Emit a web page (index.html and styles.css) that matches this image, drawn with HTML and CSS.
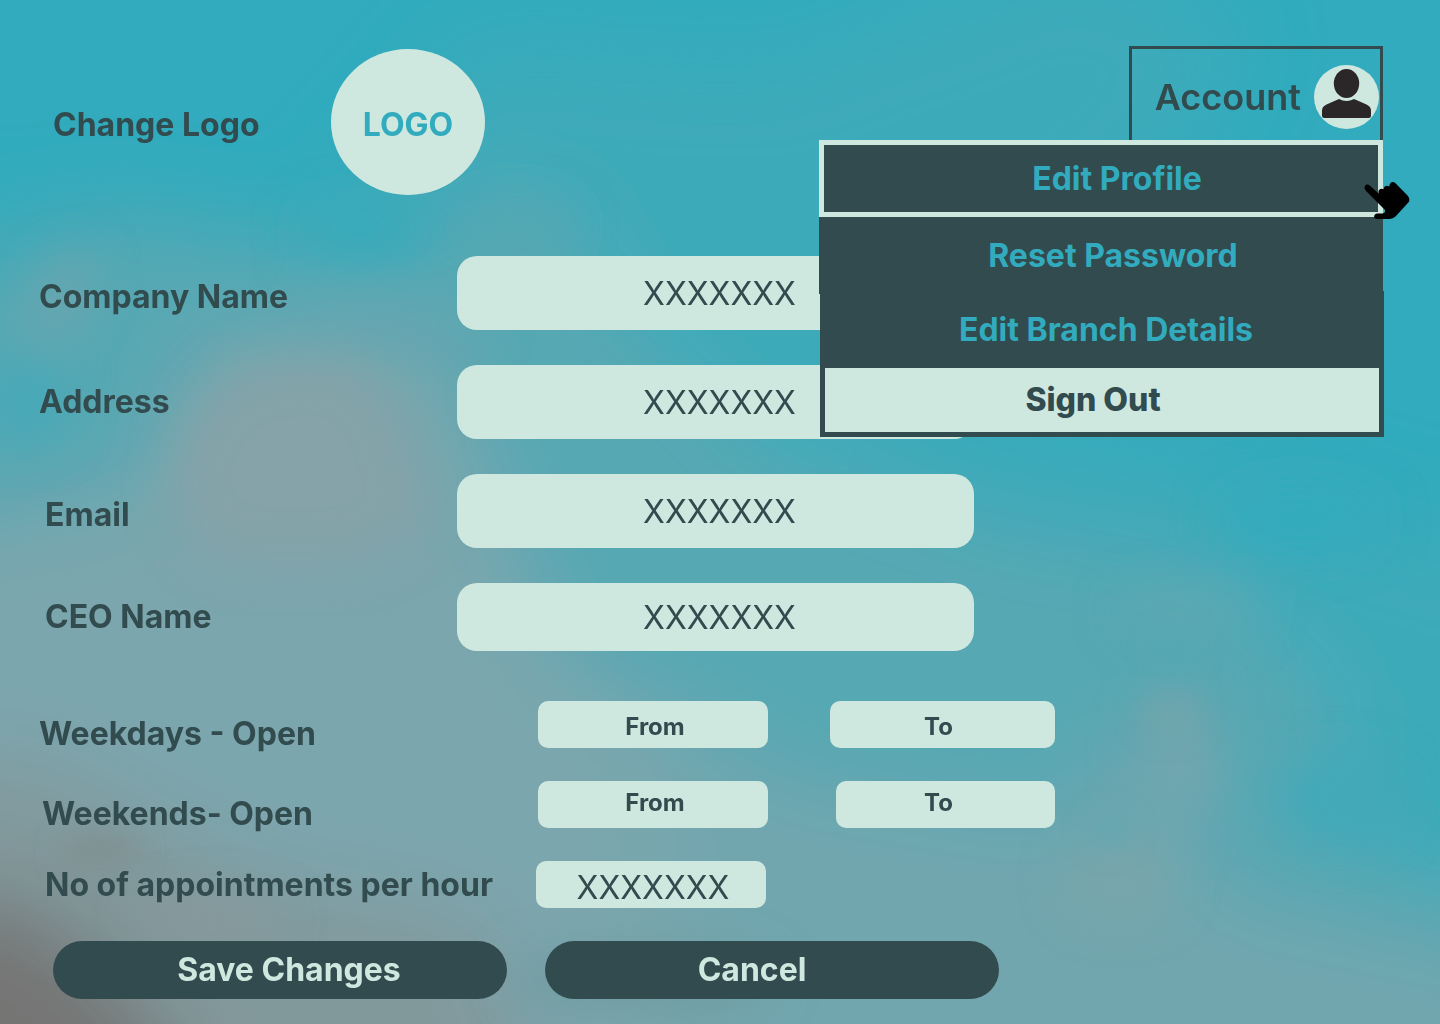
FILE: index.html
```html
<!DOCTYPE html>
<html lang="en">
<head>
  <meta charset="utf-8">
  <meta name="viewport" content="width=device-width, initial-scale=1">
  <title>Edit Profile</title>
  <link rel="stylesheet" href="styles.css">
</head>
<body>
  <svg class="sky" viewBox="0 0 1440 1024" preserveAspectRatio="none" aria-hidden="true">
    <defs>
      <filter id="soft" x="-30%" y="-30%" width="160%" height="160%"><feGaussianBlur stdDeviation="42"/></filter>
      <filter id="mid" x="-50%" y="-50%" width="200%" height="200%"><feGaussianBlur stdDeviation="24"/></filter>
      <filter id="crisp" x="-50%" y="-50%" width="200%" height="200%"><feGaussianBlur stdDeviation="14"/></filter>
    </defs>
    <rect width="1440" height="1024" fill="#31abbd"/>
    <g filter="url(#soft)">
      <path fill="#3eaaba" d="M-100 220 L300 240 L480 40 L760 60 L1100 -60 L1240 40 L1180 160 L900 400 L1200 460 L1540 560 L1540 1150 L-100 1150Z"/>
      <path fill="#56a8b3" d="M-100 310 L100 210 L420 260 L480 180 L560 200 L640 330 L760 450 L960 520 L1040 540 L1200 560 L1340 700 L1330 840 L1540 910 L1540 1150 L-100 1150Z"/>
      <path fill="#7ca6ad" d="M-100 540 L140 490 L210 340 L440 350 L500 520 L560 660 L740 760 L880 900 L880 1150 L-100 1150Z"/>
      <path fill="#72a6ae" d="M640 740 L820 790 L1060 830 L1140 720 L1220 900 L1500 960 L1540 1150 L700 1150Z"/>
      <path fill="#82999c" d="M-100 760 L40 760 L260 880 L480 920 L560 1150 L-100 1150Z"/>
      <path fill="#747473" d="M-150 900 L20 900 L120 980 L240 1150 L-150 1150Z"/>
    </g>
    <g filter="url(#mid)">
      <path fill="#85a3a8" d="M170 500 L190 420 L240 370 L350 360 L390 400 L430 520 L360 560 L220 560Z"/>
      <ellipse cx="390" cy="322" rx="100" ry="14" fill="#68a6b0"/>
      <ellipse cx="60" cy="300" rx="20" ry="50" fill="#6fa5ae" transform="rotate(28 60 300)"/>
      <ellipse cx="25" cy="400" rx="40" ry="45" fill="#46a9b8"/>
      <ellipse cx="520" cy="225" rx="50" ry="18" fill="#55a7b2"/>
      <ellipse cx="1180" cy="760" rx="40" ry="70" fill="#71a6af"/>
      <ellipse cx="1190" cy="610" rx="70" ry="18" fill="#5fa8b2"/>
      <ellipse cx="1120" cy="880" rx="50" ry="34" fill="#78a6ab"/>
      <ellipse cx="1340" cy="800" rx="60" ry="40" fill="#43a9b8"/>
      <ellipse cx="360" cy="230" rx="60" ry="22" fill="#34abbc"/>
      <ellipse cx="640" cy="980" rx="130" ry="30" fill="#709ba1"/>
      <ellipse cx="210" cy="920" rx="70" ry="18" fill="#889a9d"/>
      <ellipse cx="1300" cy="520" rx="80" ry="30" fill="#33abbd"/>
    </g>
    <g filter="url(#crisp)">
      <ellipse cx="1170" cy="715" rx="28" ry="18" fill="#70a5ac"/>
      <ellipse cx="1175" cy="650" rx="18" ry="16" fill="#53a8b3"/>
      <ellipse cx="1110" cy="830" rx="18" ry="14" fill="#60a8b2"/>
      <ellipse cx="100" cy="850" rx="40" ry="14" fill="#7f8f90"/>
    </g>
  </svg>

  <main class="page">
    <header class="header">
      <label class="label header__label" for="logo">Change Logo</label>
      <button class="logo" id="logo" type="button">LOGO</button>

      <div class="account">
        <button class="account__toggle" type="button" aria-expanded="true">
          Account
          <svg class="avatar" viewBox="0 0 65 64" aria-hidden="true">
            <ellipse cx="32.500" cy="32" rx="32.500" ry="32" fill="#cfe8df"/>
            <ellipse cx="32.500" cy="18.500" rx="12.700" ry="14.500" fill="#2b2628"/>
            <path fill="#2b2628" d="M25 34q7.500 4 15 0l12.500 5.500q4.500 2.200 4.500 6v5q0 2.500-2.500 2.500h-44q-2.500 0-2.500-2.500v-5q0-3.800 4.500-6z"/>
          </svg>
        </button>
        <nav class="menu" aria-label="Account">
          <button class="menu__item menu__item--active" type="button">Edit Profile</button>
          <button class="menu__item menu__item--reset" type="button">Reset Password</button>
          <div class="menu__group">
            <button class="menu__item menu__item--branch" type="button">Edit Branch Details</button>
            <button class="menu__item menu__item--exit" type="button">Sign Out</button>
          </div>
        </nav>
        <svg class="pointer" viewBox="0 0 46 38" aria-hidden="true">
          <path d="M1 5C2 3.200 4.200 3.200 5.700 4.600L14.500 12.500c-.6-4 2.200-5.700 5.200-4.200C19.800 4.800 22.700 3.600 25.300 5.600 25.300 1.500 28.600-.3 31.300 2L43.500 14.500q2.600 2.500 1.500 6.300L31.500 35.500Q29 37.800 25.500 38H13c-4 0-3.700-5.400.4-5.500h4.800q3.200-.2 2.800-3.500L1.800 9.800Q-.2 7.500 1 5Z"/>
        </svg>
      </div>
    </header>

    <form class="form">
      <div class="details">
        <div class="row row--low">
          <label class="label" for="company">Company Name</label>
          <input class="field" id="company" type="text" value="XXXXXXX">
        </div>
        <div class="row">
          <label class="label" for="address">Address</label>
          <input class="field" id="address" type="text" value="XXXXXXX">
        </div>
        <div class="row row--low row--indent">
          <label class="label" for="email">Email</label>
          <input class="field" id="email" type="text" value="XXXXXXX">
        </div>
        <div class="row row--indent">
          <label class="label" for="ceo">CEO Name</label>
          <input class="field field--short" id="ceo" type="text" value="XXXXXXX">
        </div>
      </div>

      <div class="hours">
        <div class="slots slots--weekdays">
          <label class="label" for="wd-from">Weekdays - Open</label>
          <input class="field field--time" id="wd-from" type="text" placeholder="From">
          <input class="field field--time field--to" type="text" placeholder="To" aria-label="Weekdays to">
        </div>
        <div class="slots slots--weekends">
          <label class="label" for="we-from">Weekends- Open</label>
          <input class="field field--time" id="we-from" type="text" placeholder="From">
          <input class="field field--time field--to" type="text" placeholder="To" aria-label="Weekends to">
        </div>
        <div class="slots slots--rate">
          <label class="label" for="rate">No of appointments per hour</label>
          <input class="field field--count" id="rate" type="text" value="XXXXXXX">
        </div>
        <div class="actions">
          <button class="action action--save" type="submit">Save Changes</button>
          <button class="action action--cancel" type="button">Cancel</button>
        </div>
      </div>
    </form>
  </main>
</body>
</html>
```
FILE: styles.css
```css
:root {
  --teal: #31abbd;
  --slate: #324b4e;
  --mint: #cfe8df;
}

* {
  box-sizing: border-box;
}

body {
  margin: 0;
  position: relative;
  min-height: 100vh;
  overflow-x: hidden;
  background: var(--teal);
  color: var(--slate);
  font-family: Inter, "Liberation Sans", sans-serif;
  font-size: 32px;
  line-height: 38px;
}

button,
input {
  margin: 0;
  border: 0;
  color: inherit;
  font: inherit;
}

button {
  cursor: pointer;
}

.sky {
  position: absolute;
  inset: 0;
  z-index: -1;
  width: 100%;
  height: 100%;
}

.page {
  padding: 46px 57px 25px 39px;
}

.label {
  font-weight: 700;
  white-space: nowrap;
}

/* Header */

.header {
  display: flex;
  align-items: flex-start;
  min-height: 210px;
}

.header__label {
  flex: 0 0 292px;
  padding: 60px 0 0 14px;
}

.logo {
  width: 154px;
  height: 146px;
  margin-top: 3px;
  padding: 6px 0 0;
  border-radius: 50%;
  background: var(--mint);
  color: var(--teal);
  font-weight: 700;
}

.account {
  position: relative;
  margin-left: auto;
}

.account__toggle {
  display: flex;
  align-items: center;
  justify-content: flex-end;
  gap: 13px;
  width: 254px;
  height: 102px;
  padding: 0 1px 0 0;
  border: 3px solid var(--slate);
  background: none;
  font-size: 36px;
  font-weight: 600;
}

.avatar {
  width: 65px;
  height: 64px;
}

.menu {
  position: absolute;
  top: 94px;
  right: 0;
  z-index: 2;
  display: flex;
  flex-direction: column;
  width: 564px;
}

.menu__group {
  display: flex;
  flex-direction: column;
  margin: -3px -1px 0 1px;
}

.menu__item {
  height: 77px;
  padding: 0;
  border: 5px solid var(--slate);
  background: var(--slate);
  color: var(--teal);
  font-weight: 700;
}

.menu__item--active {
  padding-left: 32px;
  border-color: var(--mint);
}

.menu__item--reset {
  padding-left: 24px;
}

.menu__item--branch {
  padding-left: 8px;
}

.menu__item--exit {
  height: 74px;
  margin-top: -5px;
  padding-right: 18px;
  background: var(--mint);
  color: var(--slate);
  font-weight: 800;
}

.pointer {
  position: absolute;
  top: 135px;
  right: -27px;
  z-index: 3;
  width: 46px;
  height: 38px;
}

/* Form */

.details,
.hours {
  display: grid;
}

.details {
  gap: 35px;
}

.hours {
  gap: 33px;
  margin-top: 50px;
}

.row {
  display: grid;
  grid-template-columns: 418fr 517fr 409fr;
  align-items: center;
}

.row--low .label {
  padding-top: 8px;
}

.row--indent .label {
  padding-left: 6px;
}

.field {
  width: 100%;
  min-width: 0;
  height: 74px;
  padding: 0 0 0 8px;
  border-radius: 20px;
  background: var(--mint);
  text-align: center;
}

.field--short {
  height: 68px;
}

.slots {
  display: grid;
  grid-template-columns: 499fr 230fr 62fr 225fr 328fr;
  align-items: center;
}

.slots--weekends {
  grid-template-columns: 499fr 230fr 68fr 219fr 328fr;
}

.slots--rate {
  grid-template-columns: 497fr 230fr 617fr;
}

.slots--weekdays .label,
.slots--weekends .label {
  margin-bottom: -10px;
  padding-top: 8px;
}

.slots--weekends .label {
  padding-left: 3px;
}

.slots--rate .label {
  padding-left: 6px;
}

.field--time,
.field--count {
  height: 47px;
  border-radius: 10px;
}

.field--time {
  padding: 0 0 0 4px;
  font-size: 24px;
  font-weight: 700;
}

.field--time::placeholder {
  color: var(--slate);
  opacity: 1;
}

.field--to {
  grid-column: 4;
  padding: 0 8px 0 0;
}

.slots--weekdays .field {
  padding-top: 4px;
}

.slots--weekends .field {
  padding-bottom: 4px;
}

.slots--weekends .field--to {
  padding-right: 14px;
}

.field--count {
  padding: 6px 0 0 4px;
}

.actions {
  display: grid;
  grid-template-columns: 454fr 454fr 346fr;
  gap: 38px;
  padding-left: 14px;
}

.action {
  height: 58px;
  padding: 0;
  border-radius: 29px;
  background: var(--slate);
  color: var(--mint);
  font-weight: 700;
}

.action--save {
  padding-left: 18px;
}

.action--cancel {
  padding-right: 40px;
}
```
